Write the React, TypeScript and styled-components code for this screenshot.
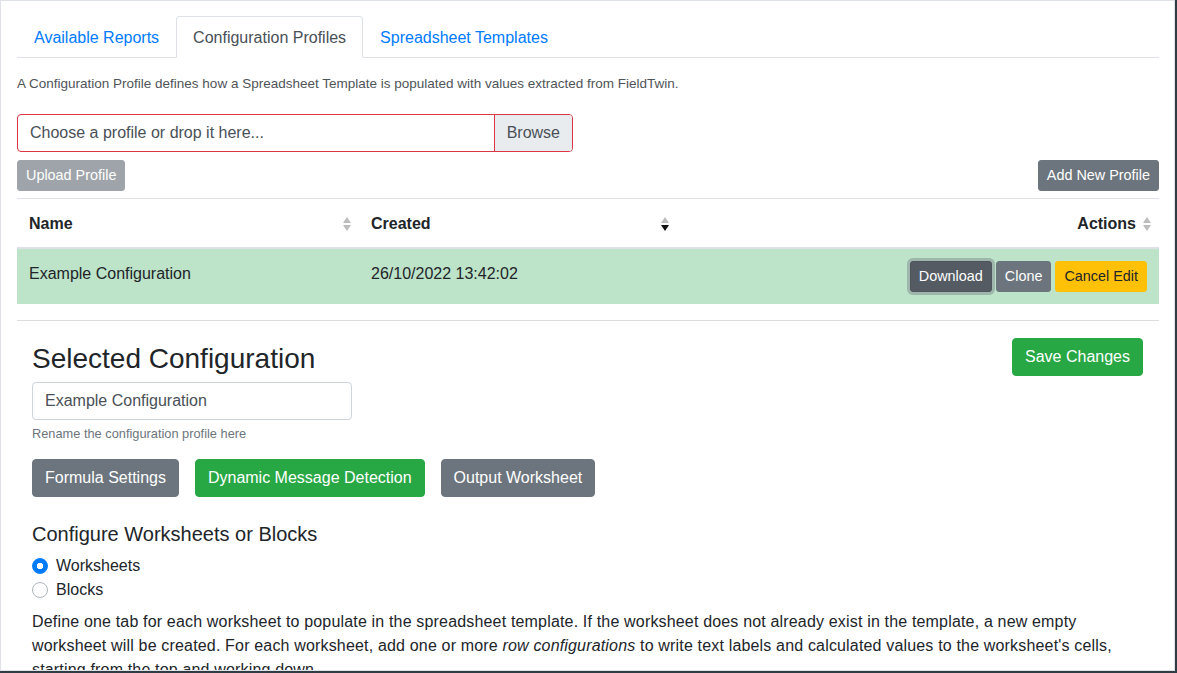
import React from "react";
import styled, { createGlobalStyle, css } from "styled-components";

const GlobalStyle = createGlobalStyle`
  html, body {
    margin: 0;
    padding: 0;
    background: #2f3c43;
  }
  body {
    font-family: "Liberation Sans", Arial, sans-serif;
    color: #212529;
    font-size: 16px;
    line-height: 1.5;
  }
  * { box-sizing: border-box; }
`;

const Panel = styled.div`
  width: 1175px;
  height: 671px;
  background: #fff;
  border: 1px solid #dee2e6;
  overflow: hidden;
  padding: 15px 15px 0 16px;
`;

const Tabs = styled.ul`
  display: flex;
  list-style: none;
  margin: 0;
  padding: 0;
  border-bottom: 1px solid #dee2e6;
`;

const Tab = styled.li<{ $active?: boolean }>`
  margin-bottom: -1px;
  padding: 9px 16px 7px;
  line-height: 24px;
  border: 1px solid transparent;
  border-top-left-radius: 4px;
  border-top-right-radius: 4px;
  color: #007bff;
  cursor: pointer;
  ${(p) =>
    p.$active &&
    css`
      color: #495057;
      background: #fff;
      border-color: #dee2e6 #dee2e6 #fff;
    `}
`;

const Intro = styled.p`
  margin: 16px 0 20px;
  font-size: 13.5px;
  line-height: 20px;
  color: #4f5459;
`;

const FileInput = styled.div`
  display: flex;
  width: 556px;
  height: 38px;
  border: 1px solid #dc3545;
  border-radius: 4px;
  overflow: hidden;
`;

const FileLabel = styled.div`
  flex: 1;
  padding: 0 12px;
  line-height: 36px;
  color: #495057;
`;

const BrowseButton = styled.div`
  padding: 0 12px;
  line-height: 36px;
  background: #e9ecef;
  border-left: 1px solid #dc3545;
  color: #495057;
`;

const ToolbarRow = styled.div`
  display: flex;
  justify-content: space-between;
  align-items: center;
  margin-top: 8px;
  margin-bottom: 7px;
`;

type Variant = "secondary" | "success" | "warning" | "dark";

const variants: Record<Variant, ReturnType<typeof css>> = {
  secondary: css`
    background: #6c757d;
    border-color: #6c757d;
    color: #fff;
  `,
  success: css`
    background: #28a745;
    border-color: #28a745;
    color: #fff;
  `,
  warning: css`
    background: #ffc107;
    border-color: #ffc107;
    color: #212529;
  `,
  dark: css`
    background: #545b62;
    border-color: #4e555b;
    color: #fff;
    box-shadow: 0 0 0 3px rgba(130, 138, 145, 0.5);
  `,
};

const Button = styled.button<{ $variant?: Variant; $small?: boolean; $disabled?: boolean }>`
  font-family: inherit;
  border: 1px solid transparent;
  border-radius: 4px;
  cursor: pointer;
  white-space: nowrap;
  ${(p) =>
    p.$small
      ? css`
          font-size: 14.4px;
          line-height: 21px;
          padding: 4px 8px;
          border-radius: 3px;
        `
      : css`
          font-size: 16px;
          line-height: 24px;
          padding: 6px 12px;
        `}
  ${(p) => variants[p.$variant ?? "secondary"]}
  ${(p) => p.$disabled && css`opacity: 0.65;`}
`;

const Table = styled.table`
  width: 100%;
  border-collapse: collapse;
  table-layout: fixed;
`;

const Th = styled.th<{ $width?: number }>`
  width: ${(p) => (p.$width ? `${p.$width}px` : "auto")};
  padding: 13px 8px 11px 12px;
  text-align: left;
  font-weight: 700;
  line-height: 24px;
  border-top: 1px solid #dee2e6;
  border-bottom: 2px solid #dee2e6;
`;

const HeadInner = styled.div<{ $right?: boolean }>`
  display: flex;
  align-items: center;
  justify-content: ${(p) => (p.$right ? "flex-end" : "space-between")};
  gap: 7px;
`;

const Row = styled.tr`
  background: #bde3c8;
`;

const Td = styled.td`
  padding: 12px;
  vertical-align: top;
  line-height: 24px;
`;

const CellText = styled.div`
  padding-top: 1px;
`;

const Actions = styled.div`
  display: flex;
  justify-content: flex-end;
  align-items: center;
  gap: 4px;
`;

const Divider = styled.hr`
  margin: 16px 0 0;
  border: 0;
  border-top: 1px solid #dddddd;
`;

const Section = styled.section`
  padding: 0 16px 0 15px;
`;

const HeaderRow = styled.div`
  display: flex;
  justify-content: space-between;
  align-items: center;
  margin-top: 17px;
`;

const Title = styled.h3`
  margin: 0;
  padding-top: 4px;
  font-size: 28px;
  font-weight: 500;
  line-height: 33.6px;
`;

const NameInput = styled.input`
  display: block;
  margin-top: 6px;
  width: 320px;
  height: 38px;
  padding: 6px 12px;
  font-family: inherit;
  font-size: 16px;
  color: #495057;
  border: 1px solid #ced4da;
  border-radius: 4px;
`;

const HelpText = styled.small`
  display: block;
  margin-top: 4px;
  font-size: 12.8px;
  line-height: 19px;
  color: #6c757d;
`;

const ButtonRow = styled.div`
  display: flex;
  gap: 16px;
  margin-top: 16px;
`;

const Subtitle = styled.h5`
  margin: 25px 0 8px;
  font-size: 20px;
  font-weight: 500;
  line-height: 24px;
`;

const RadioLine = styled.label`
  display: flex;
  align-items: center;
  gap: 8px;
  line-height: 24px;
`;

const RadioDot = styled.span<{ $checked?: boolean }>`
  width: 16px;
  height: 16px;
  border-radius: 50%;
  border: 1px solid ${(p) => (p.$checked ? "#007bff" : "#adb5bd")};
  background: ${(p) =>
    p.$checked ? "radial-gradient(circle, #fff 0 3px, #007bff 3.5px)" : "#fff"};
`;

const Paragraph = styled.p`
  margin: 8px 0 0;
  line-height: 24px;
  letter-spacing: 0.17px;
`;

function SortIcon({ active }: { active?: boolean }) {
  return (
    <svg width="8" height="14" viewBox="0 0 8 14">
      <path d="M4 0 L8 6 L0 6 Z" fill="#bdbdbd" />
      <path d="M0 8 L8 8 L4 14 Z" fill={active ? "#111" : "#bdbdbd"} />
    </svg>
  );
}

export default function App() {
  return (
    <>
      <GlobalStyle />
      <Panel>
        <Tabs>
          <Tab>Available Reports</Tab>
          <Tab $active>Configuration Profiles</Tab>
          <Tab>Spreadsheet Templates</Tab>
        </Tabs>

        <Intro>
          A Configuration Profile defines how a Spreadsheet Template is populated with values
          extracted from FieldTwin.
        </Intro>

        <FileInput>
          <FileLabel>Choose a profile or drop it here...</FileLabel>
          <BrowseButton>Browse</BrowseButton>
        </FileInput>

        <ToolbarRow>
          <Button $small $disabled>
            Upload Profile
          </Button>
          <Button $small>Add New Profile</Button>
        </ToolbarRow>

        <Table>
          <thead>
            <tr>
              <Th $width={342}>
                <HeadInner>
                  Name
                  <SortIcon />
                </HeadInner>
              </Th>
              <Th $width={318}>
                <HeadInner>
                  Created
                  <SortIcon active />
                </HeadInner>
              </Th>
              <Th>
                <HeadInner $right>
                  Actions
                  <SortIcon />
                </HeadInner>
              </Th>
            </tr>
          </thead>
          <tbody>
            <Row>
              <Td>
                <CellText>Example Configuration</CellText>
              </Td>
              <Td>
                <CellText>26/10/2022 13:42:02</CellText>
              </Td>
              <Td>
                <Actions>
                  <Button $small $variant="dark">
                    Download
                  </Button>
                  <Button $small>Clone</Button>
                  <Button $small $variant="warning">
                    Cancel Edit
                  </Button>
                </Actions>
              </Td>
            </Row>
          </tbody>
        </Table>

        <Divider />

        <Section>
          <HeaderRow>
            <Title>Selected Configuration</Title>
            <Button $variant="success">Save Changes</Button>
          </HeaderRow>
          <NameInput defaultValue="Example Configuration" />
          <HelpText>Rename the configuration profile here</HelpText>

          <ButtonRow>
            <Button>Formula Settings</Button>
            <Button $variant="success">Dynamic Message Detection</Button>
            <Button>Output Worksheet</Button>
          </ButtonRow>

          <Subtitle>Configure Worksheets or Blocks</Subtitle>
          <RadioLine>
            <RadioDot $checked />
            Worksheets
          </RadioLine>
          <RadioLine>
            <RadioDot />
            Blocks
          </RadioLine>

          <Paragraph>
            Define one tab for each worksheet to populate in the spreadsheet template. If the
            worksheet does not already exist in the template, a new empty worksheet will be
            created. For each worksheet, add one or more <em>row configurations</em> to write
            text labels and calculated values to the worksheet's cells, starting from the top
            and working down.
          </Paragraph>
        </Section>
      </Panel>
    </>
  );
}
